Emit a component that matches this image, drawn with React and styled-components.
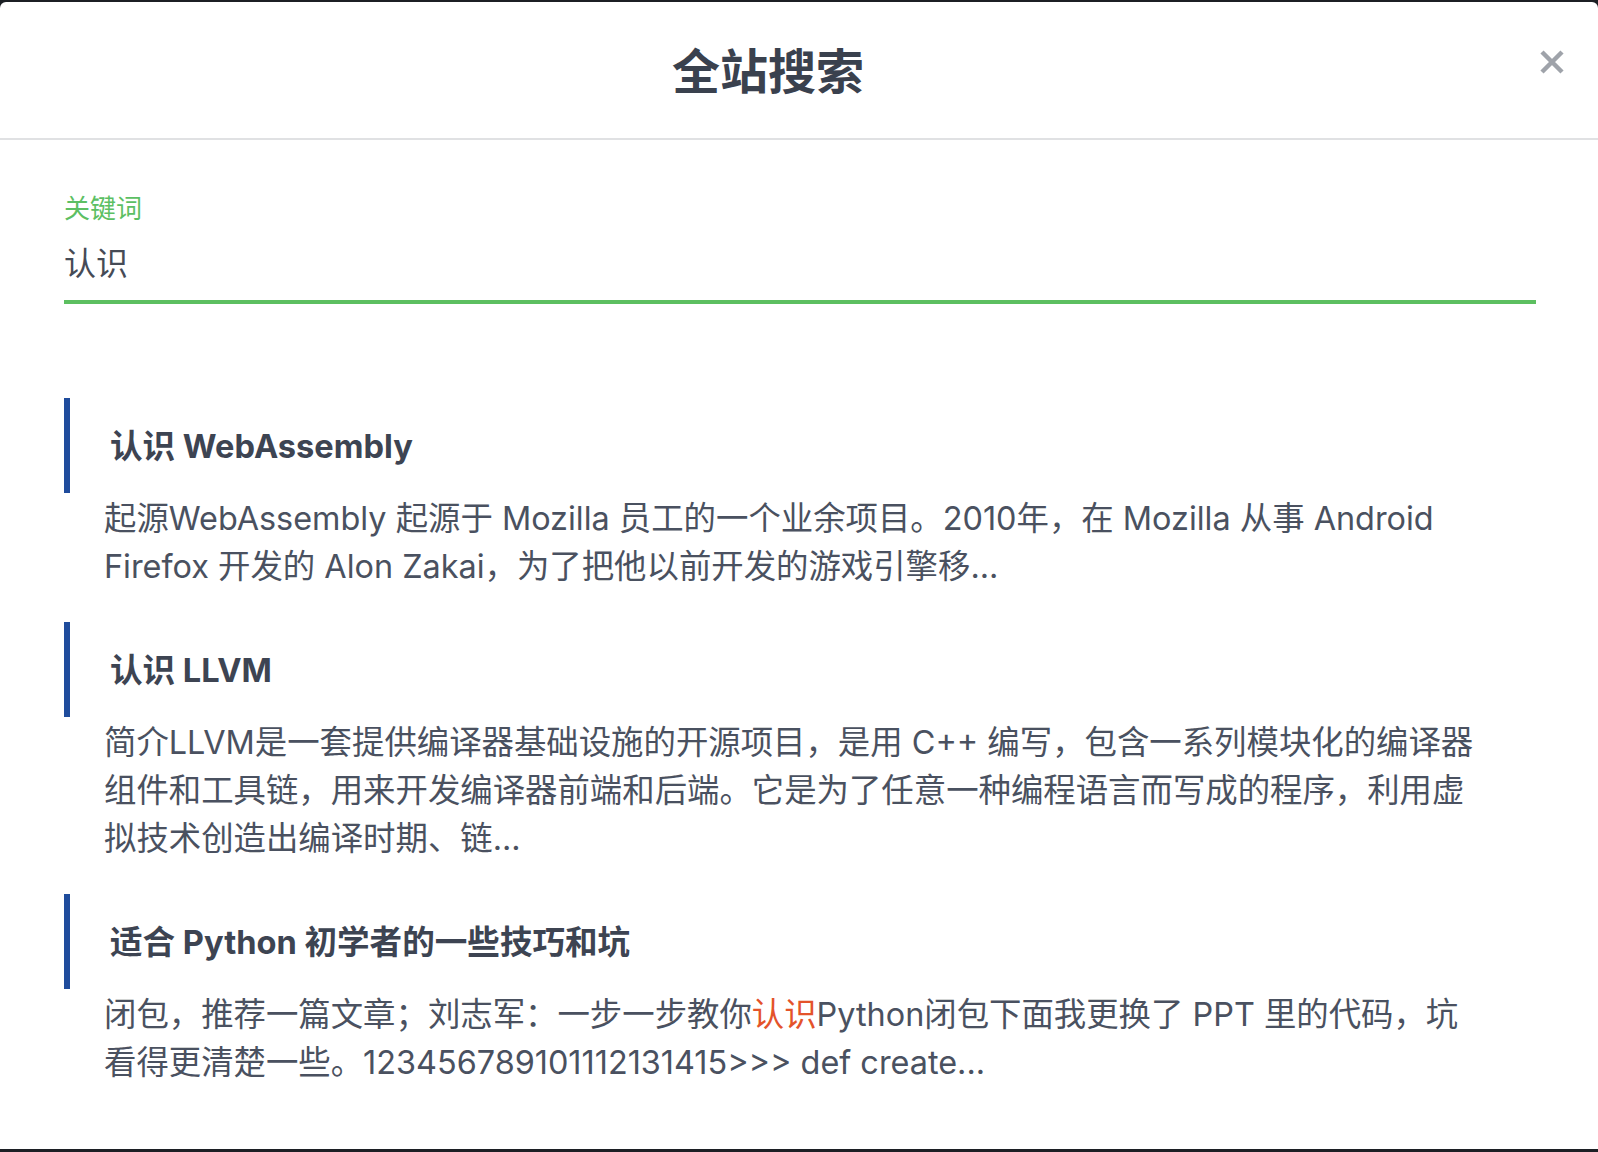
import React from 'react';
import styled, { createGlobalStyle } from 'styled-components';

const results = [
  {
    title: '认识 WebAssembly',
    lines: [
      ['起源WebAssembly 起源于 Mozilla 员工的一个业余项目。2010年，在 Mozilla 从事 Android'],
      ['Firefox 开发的 Alon Zakai，为了把他以前开发的游戏引擎移...'],
    ],
  },
  {
    title: '认识 LLVM',
    lines: [
      ['简介LLVM是一套提供编译器基础设施的开源项目，是用 C++ 编写，包含一系列模块化的编译器'],
      ['组件和工具链，用来开发编译器前端和后端。它是为了任意一种编程语言而写成的程序，利用虚'],
      ['拟技术创造出编译时期、链...'],
    ],
  },
  {
    title: '适合 Python 初学者的一些技巧和坑',
    lines: [
      ['闭包，推荐一篇文章；刘志军：一步一步教你', { mark: '认识' }, 'Python闭包下面我更换了 PPT 里的代码，坑'],
      ['看得更清楚一些。123456789101112131415>>> def create...'],
    ],
  },
];

const SearchModal = () => {
  return (
    <>
      <GlobalStyle />
      <Modal>
        <Header>
          <Title>全站搜索</Title>
          <CloseButton aria-label="关闭">
            <svg width="24" height="24" viewBox="0 0 24 24">
              <path d="M2 2 L22 22 M22 2 L2 22" stroke="#9fa3aa" strokeWidth="4.5" fill="none" />
            </svg>
          </CloseButton>
        </Header>

        <Body>
          <Field>
            <Label>关键词</Label>
            <Input defaultValue="认识" />
          </Field>

          <ResultList>
            {results.map((item) => (
              <Result key={item.title}>
                <ResultTitle>{item.title}</ResultTitle>
                <Excerpt>
                  {item.lines.map((parts, i) => (
                    <Line key={i}>
                      {parts.map((p, j) =>
                        typeof p === 'string' ? p : <Mark key={j}>{p.mark}</Mark>
                      )}
                    </Line>
                  ))}
                </Excerpt>
              </Result>
            ))}
          </ResultList>
        </Body>
      </Modal>
    </>
  );
};

const GlobalStyle = createGlobalStyle`
  html, body {
    margin: 0;
    padding: 0;
  }

  body {
    background: linear-gradient(#1c1f24 0 50%, #5a5b5e 50% 100%);
    font-family: "Inter", "Noto Sans CJK SC", sans-serif;
  }
`;

const Modal = styled.div`
  margin-top: 2px;
  height: 1147px;
  background: #fff;
  border-radius: 6px 6px 0 0;
  overflow: hidden;
`;

const Header = styled.div`
  display: flex;
  height: 136px;
  padding-right: 34px;
  border-bottom: 2px solid #e0e1e3;
`;

const Title = styled.h1`
  flex: 1;
  align-self: center;
  margin: 0 0 0 -4px;
  padding-top: 4px;
  text-align: center;
  font-size: 48px;
  line-height: 60px;
  font-weight: 700;
  color: #3a414e;
`;

const CloseButton = styled.button`
  align-self: flex-start;
  margin-top: 48px;
  width: 24px;
  height: 24px;
  padding: 0;
  border: none;
  background: none;
  cursor: pointer;

  svg {
    display: block;
  }
`;

const Body = styled.div`
  padding: 0 62px 0 64px;
`;

const Field = styled.div`
  padding-top: 54px;
`;

const Label = styled.div`
  font-size: 26px;
  line-height: 30px;
  color: #5cbf63;
`;

const Input = styled.input`
  display: block;
  box-sizing: content-box;
  width: 100%;
  height: 40px;
  padding: 20px 0 16px;
  border: none;
  border-bottom: 4px solid #5cbf60;
  outline: none;
  background: transparent;
  font-family: inherit;
  font-size: 32px;
  line-height: 40px;
  color: #464b56;
`;

const ResultList = styled.div`
  padding-top: 94px;
`;

const Result = styled.div`
  margin-bottom: 31px;
`;

const ResultTitle = styled.h3`
  display: flex;
  align-items: center;
  height: 95px;
  margin: 0;
  padding: 0 0 4px 40px;
  box-sizing: border-box;
  border-left: 6px solid #1f4c9c;
  font-size: 32.6px;
  font-weight: 700;
  color: #3d4452;
`;

const Excerpt = styled.p`
  margin: 2px 0 0;
  padding: 0 40px;
  font-size: 32.4px;
  line-height: 48px;
  color: #4a5160;
`;

const Line = styled.span`
  display: block;
  white-space: nowrap;
`;

const Mark = styled.span`
  color: #e4532a;
`;

export default SearchModal;
